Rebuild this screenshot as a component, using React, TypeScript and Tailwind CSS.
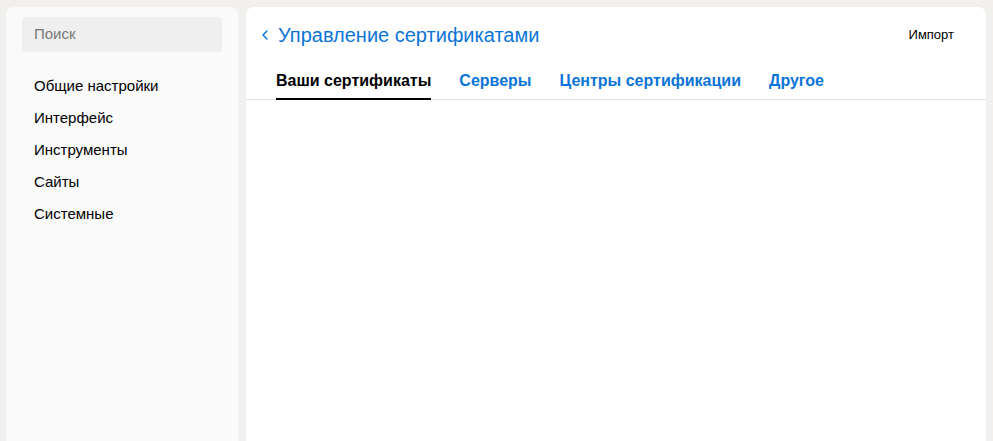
import { ChevronLeft } from "lucide-react";

const navItems = ["Общие настройки", "Интерфейс", "Инструменты", "Сайты", "Системные"];
const tabs = ["Ваши сертификаты", "Серверы", "Центры сертификации", "Другое"];

export default function App() {
  return (
    <div
      className="flex h-[441px] gap-2 overflow-hidden bg-[#f1f0ee] pl-[6px] pr-[7px] pt-[7px]"
      style={{ fontFamily: '"Liberation Sans", Arial, sans-serif' }}
    >
      {/* sidebar */}
      <aside className="h-[460px] w-[232px] shrink-0 rounded-lg bg-[#fafafa] px-4 pt-[10px]">
        <div className="flex h-[35px] items-center rounded bg-[#efefef] px-3 text-[15px] text-[#777]">
          Поиск
        </div>
        <nav className="mt-[18px] flex flex-col">
          {navItems.map((item) => (
            <div key={item} className="flex h-8 items-center px-3 text-[15px] text-black">
              {item}
            </div>
          ))}
        </nav>
      </aside>

      {/* main panel */}
      <main className="h-[460px] flex-1 rounded-lg bg-white">
        <div className="flex h-[55px] items-center justify-between pl-[11px] pr-[32px] pt-[1px]">
          <div className="flex items-center gap-[5px] text-[#0b74d8]">
            <ChevronLeft className="h-[16px] w-[16px]" strokeWidth={2.2} />
            <span className="text-[20px] leading-none">Управление сертификатами</span>
          </div>
          <button className="text-[13px] text-black">Импорт</button>
        </div>
        <div className="flex gap-[28px] border-b border-[#e3e3e3] pl-[30px]">
          {tabs.map((tab, i) => (
            <div
              key={tab}
              className={
                i === 0
                  ? "-mb-px border-b-2 border-black pb-[5px] pt-[7px] text-[16px] leading-6 font-bold text-black"
                  : "pb-[5px] pt-[7px] text-[16px] leading-6 font-bold text-[#0b74d8]"
              }
            >
              {tab}
            </div>
          ))}
        </div>
      </main>
    </div>
  );
}
